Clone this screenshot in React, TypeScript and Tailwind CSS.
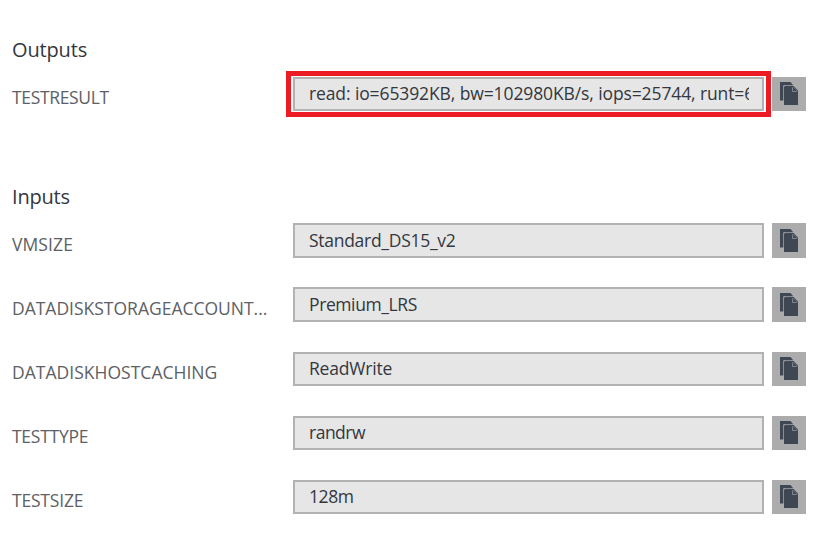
type Field = {
  label: string;
  value: string;
  labelClass: string;
  valueClass: string;
  rowClass: string;
  iconClass: string;
  highlighted?: boolean;
};

const outputs: Field[] = [
  {
    label: "TESTRESULT",
    value: "read: io=65392KB, bw=102980KB/s, iops=25744, runt=6",
    labelClass: "pt-2 tracking-[-0.35px]",
    valueClass: "pt-0.5 tracking-[-0.11px]",
    rowClass: "h-[34px]",
    iconClass: "pt-[5px]",
    highlighted: true,
  },
];

const inputs: Field[] = [
  { label: "VMSIZE", value: "Standard_DS15_v2", labelClass: "pt-[9px] tracking-[0.1px]", valueClass: "pt-[3px] tracking-[-0.28px]", rowClass: "h-[35px] mb-[29px]", iconClass: "pt-1.5" },
  { label: "DATADISKSTORAGEACCOUNT...", value: "Premium_LRS", labelClass: "pt-[9px] tracking-[-0.01px]", valueClass: "pt-[3px] tracking-[-0.4px]", rowClass: "h-[35px] mb-[30px]", iconClass: "pt-1.5" },
  { label: "DATADISKHOSTCACHING", value: "ReadWrite", labelClass: "pt-2 tracking-[0.02px]", valueClass: "pt-0.5 tracking-[-0.2px]", rowClass: "h-[34px] mb-[30px]", iconClass: "pt-[5px]" },
  { label: "TESTTYPE", value: "randrw", labelClass: "pt-2 tracking-[-0.27px]", valueClass: "pt-0.5 tracking-[-0.5px]", rowClass: "h-[34px] mb-[30px]", iconClass: "pt-[5px]" },
  { label: "TESTSIZE", value: "128m", labelClass: "pt-2 tracking-[-0.2px]", valueClass: "pt-0.5 tracking-[-0.4px]", rowClass: "h-[34px]", iconClass: "pt-[5px]" },
];

function CopyIcon() {
  return (
    <svg width="18" height="23" viewBox="0 0 18 23" aria-hidden="true">
      <path d="M0 0h10.5L13 3H4L3 4v14.5H0z" fill="#3f4753" />
      <path d="M4 5l1-1h8.5L18 8.5V23H4z" fill="#3f4753" />
      <path d="M3.5 18.5V4.5l1-1H13" fill="none" stroke="#8b9096" />
      <path d="M12.5 5.5v4H16.5" fill="none" stroke="#858a90" />
      <path d="M13 5l4.5 4.5" fill="none" stroke="#626974" />
    </svg>
  );
}

function FieldRow({ label, value, labelClass, valueClass, rowClass, iconClass, highlighted }: Field) {
  return (
    <div className={`flex ${rowClass}`}>
      <div className={`w-[281px] shrink-0 whitespace-nowrap text-[17.5px] leading-6 text-[#5d6065] ${labelClass}`}>{label}</div>
      <div className="relative w-[471px] shrink-0 border-2 border-[#b2b2b2] bg-[#e6e6e6] pr-[13px] pl-[14px]">
        <div className={`overflow-hidden whitespace-nowrap text-[17.5px] leading-6 text-[#33373e] ${valueClass}`}>{value}</div>
        {highlighted && <div className="pointer-events-none absolute -top-2 -left-[9px] h-[46px] w-[485px] border-5 border-[#ed1c24]" />}
      </div>
      <button type="button" aria-label={`Copy ${label}`} className={`ml-2 flex w-[34px] shrink-0 items-start bg-[#acacac] pl-2 ${iconClass}`}>
        <CopyIcon />
      </button>
    </div>
  );
}

export default function App() {
  return (
    <main className="h-[534px] w-[825px] overflow-hidden bg-white pl-3 font-['Open_Sans','Noto_Sans',sans-serif]">
      <section className="pt-9">
        <h2 className="mb-[14px] text-[20px] leading-[27px] tracking-[-0.15px] text-[#33373e]">Outputs</h2>
        {outputs.map((field) => <FieldRow key={field.label} {...field} />)}
      </section>
      <section className="pt-[72px]">
        <h2 className="mb-[13px] text-[20px] leading-[27px] tracking-[-0.2px] text-[#33373e]">Inputs</h2>
        {inputs.map((field) => <FieldRow key={field.label} {...field} />)}
      </section>
    </main>
  );
}
